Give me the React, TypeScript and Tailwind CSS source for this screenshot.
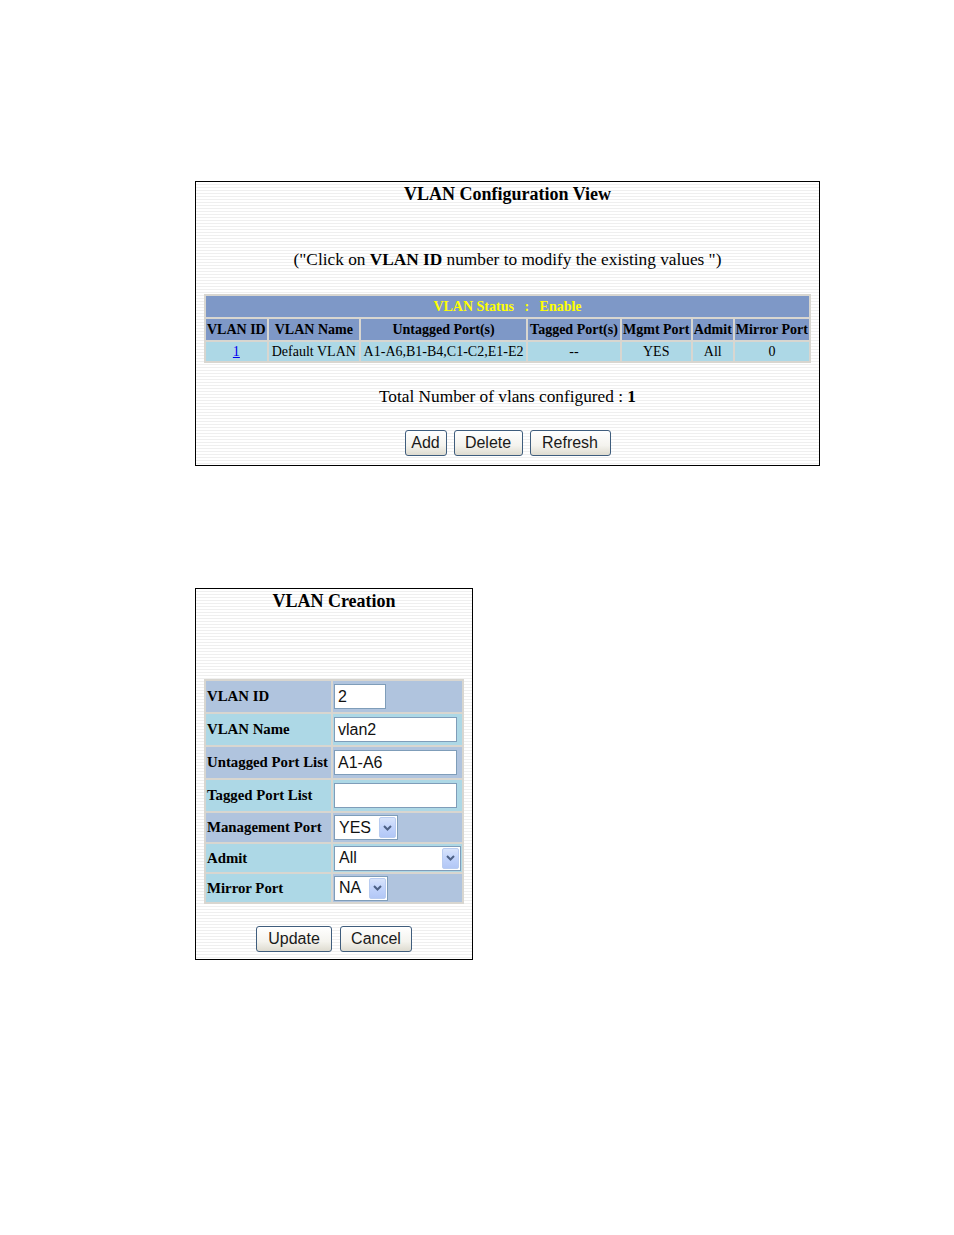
import React from "react";

const stripes =
  "bg-[repeating-linear-gradient(180deg,#ffffff_0px,#ffffff_2px,#efefef_2px,#efefef_3px)]";

function Btn({ label, w }: { label: string; w: string }) {
  return (
    <button
      className={`${w} h-[26px] rounded-[3px] border border-[#3f5d7d] bg-[linear-gradient(180deg,#ffffff_0%,#f4f3ee_60%,#dedbd0_100%)] text-[16px] leading-none text-[#1a1a1a] [font-family:'Liberation_Sans',Arial,sans-serif] flex items-center justify-center`}
    >
      {label}
    </button>
  );
}

function Chevron() {
  return (
    <svg width="9" height="6" viewBox="0 0 9 6">
      <path d="M1 1 L4.5 4.5 L8 1" fill="none" stroke="#4d6185" strokeWidth="2" />
    </svg>
  );
}

function Select({ value, w }: { value: string; w: string }) {
  return (
    <div
      className={`${w} h-[25px] border border-[#7f9db9] bg-white flex items-center [font-family:'Liberation_Sans',Arial,sans-serif] text-[16px] text-[#111]`}
    >
      <span className="flex-1 pl-[4px] leading-none">{value}</span>
      <div className="w-[17px] h-[21px] mr-[1px] rounded-[2px] border border-[#b9ccf0] bg-[linear-gradient(180deg,#d8e4fb_0%,#c1d3fb_50%,#b2c7f6_100%)] flex items-center justify-center">
        <Chevron />
      </div>
    </div>
  );
}

function Input({ value, w }: { value: string; w: string }) {
  return (
    <div
      className={`${w} h-[25px] border border-[#7f9db9] bg-white flex items-center pl-[3px] [font-family:'Liberation_Sans',Arial,sans-serif] text-[16px] text-[#111] leading-none`}
    >
      {value}
    </div>
  );
}

const steel = "bg-[#b0c4de]";
const light = "bg-[#add8e6]";

export default function App() {
  const th = "bg-[#7e98c7] font-bold px-[1px] whitespace-nowrap text-center";
  const td = "bg-[#add8e6] px-[1px] whitespace-nowrap text-center";
  const rows: { label: string; lc: string; vc: string; h: string; el: React.ReactNode }[] = [
    { label: "VLAN ID", lc: steel, vc: steel, h: "h-[31px]", el: <Input value="2" w="w-[52px]" /> },
    { label: "VLAN Name", lc: light, vc: light, h: "h-[31px]", el: <Input value="vlan2" w="w-[123px]" /> },
    { label: "Untagged Port List", lc: steel, vc: steel, h: "h-[31px]", el: <Input value="A1-A6" w="w-[123px]" /> },
    { label: "Tagged Port List", lc: light, vc: light, h: "h-[31px]", el: <Input value="" w="w-[123px]" /> },
    { label: "Management Port", lc: steel, vc: steel, h: "h-[29px]", el: <Select value="YES" w="w-[64px]" /> },
    { label: "Admit", lc: light, vc: light, h: "h-[28px]", el: <Select value="All" w="w-[127px]" /> },
    { label: "Mirror Port", lc: light, vc: steel, h: "h-[28px]", el: <Select value="NA" w="w-[54px]" /> },
  ];

  return (
    <div className="min-h-[1235px] w-[954px] bg-white pt-[181px] pl-[195px] [font-family:'Liberation_Serif','Times_New_Roman',serif] text-black">
      {/* Panel 1 */}
      <div className={`w-[625px] h-[285px] border border-black ${stripes} flex flex-col items-center`}>
        <div className="h-[24px] leading-[24px] text-[18px] font-bold">VLAN Configuration View</div>
        <div className="mt-[42px] h-[24px] leading-[24px] text-[17.3px]">
          ("Click on <span className="font-bold">VLAN ID</span> number to modify the existing values ")
        </div>
        <table className="mt-[22px] border-separate border-spacing-[2px] bg-[#d8d6d0] text-[14px] leading-[18px] w-[607px]">
          <tbody>
            <tr className="h-[21px]">
              <td colSpan={7} className={`${th} text-[#ffff00]`}>
                VLAN Status&nbsp;&nbsp;&nbsp;:&nbsp;&nbsp;&nbsp;Enable
              </td>
            </tr>
            <tr className="h-[21px]">
              <td className={`${th} w-[60px]`}>VLAN ID</td>
              <td className={`${th} w-[91px]`}>VLAN Name</td>
              <td className={`${th} w-[166px]`}>Untagged Port(s)</td>
              <td className={`${th} w-[92px]`}>Tagged Port(s)</td>
              <td className={`${th} w-[69px]`}>Mgmt Port</td>
              <td className={`${th} w-[40px]`}>Admit</td>
              <td className={`${th} w-[73px]`}>Mirror Port</td>
            </tr>
            <tr className="h-[19px]">
              <td className={td}>
                <span className="text-[#0000ee] underline">1</span>
              </td>
              <td className={td}>Default VLAN</td>
              <td className={td}>A1-A6,B1-B4,C1-C2,E1-E2</td>
              <td className={td}>--</td>
              <td className={td}>YES</td>
              <td className={td}>All</td>
              <td className={td}>0</td>
            </tr>
          </tbody>
        </table>
        <div className="mt-[22px] h-[24px] leading-[24px] text-[17.3px]">
          Total Number of vlans configured : <span className="font-bold">1</span>
        </div>
        <div className="mt-[21px] flex gap-[7px]">
          <Btn label="Add" w="w-[42px]" />
          <Btn label="Delete" w="w-[69px]" />
          <Btn label="Refresh" w="w-[81px]" />
        </div>
      </div>

      {/* Panel 2 */}
      <div className={`mt-[122px] w-[278px] h-[372px] border border-black ${stripes} flex flex-col items-center`}>
        <div className="h-[24px] leading-[24px] text-[18px] font-bold">VLAN Creation</div>
        <table className="mt-[66px] border-separate border-spacing-[2px] bg-[#d8d6d0] text-[14.8px] w-[260px]">
          <tbody>
            {rows.map((r) => (
              <tr key={r.label} className={r.h}>
                <td className={`${r.lc} w-[125px] px-[1px] font-bold whitespace-nowrap`}>{r.label}</td>
                <td className={`${r.vc} px-[1px]`}>{r.el}</td>
              </tr>
            ))}
          </tbody>
        </table>
        <div className="mt-[22px] flex gap-[8px]">
          <Btn label="Update" w="w-[76px]" />
          <Btn label="Cancel" w="w-[72px]" />
        </div>
      </div>
    </div>
  );
}
